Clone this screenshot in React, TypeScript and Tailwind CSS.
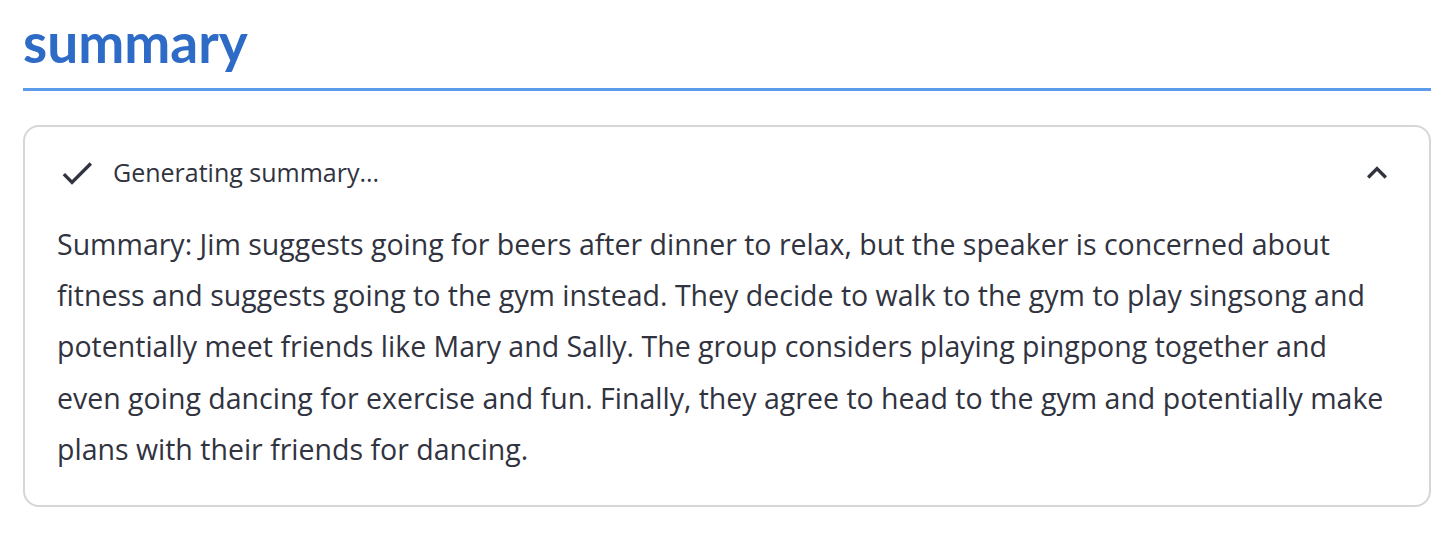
import { MdCheck, MdExpandLess } from "react-icons/md";

const lines = [
  "Summary: Jim suggests going for beers after dinner to relax, but the speaker is concerned about",
  "fitness and suggests going to the gym instead. They decide to walk to the gym to play singsong and",
  "potentially meet friends like Mary and Sally. The group considers playing pingpong together and",
  "even going dancing for exercise and fun. Finally, they agree to head to the gym and potentially make",
  "plans with their friends for dancing.",
];

export default function App() {
  return (
    <div className="min-h-[534px] w-full bg-white px-[23px] font-['Open_Sans',sans-serif] text-[#31333f]">
      <h1 className="pt-[4px] font-['Lato',sans-serif] text-[55px] font-bold leading-[76px] text-[#2d6bc6]">summary</h1>
      <div className="mt-[8px] h-[3px] w-full bg-[#5b9cec]" />
      <div className="mt-[34px] rounded-[16px] border-2 border-[#d6d6d6]">
        <div className="flex h-[92px] items-center justify-between px-[32px]">
          <div className="flex items-center gap-[16px]">
            <MdCheck size={40} />
            <span className="text-[25px]">Generating summary...</span>
          </div>
          <MdExpandLess size={40} />
        </div>
        <div className="px-[32px] pb-[30px] text-[28.5px] leading-[51.2px]">
          {lines.map((l) => (
            <div key={l} className="whitespace-nowrap">
              {l}
            </div>
          ))}
        </div>
      </div>
    </div>
  );
}
